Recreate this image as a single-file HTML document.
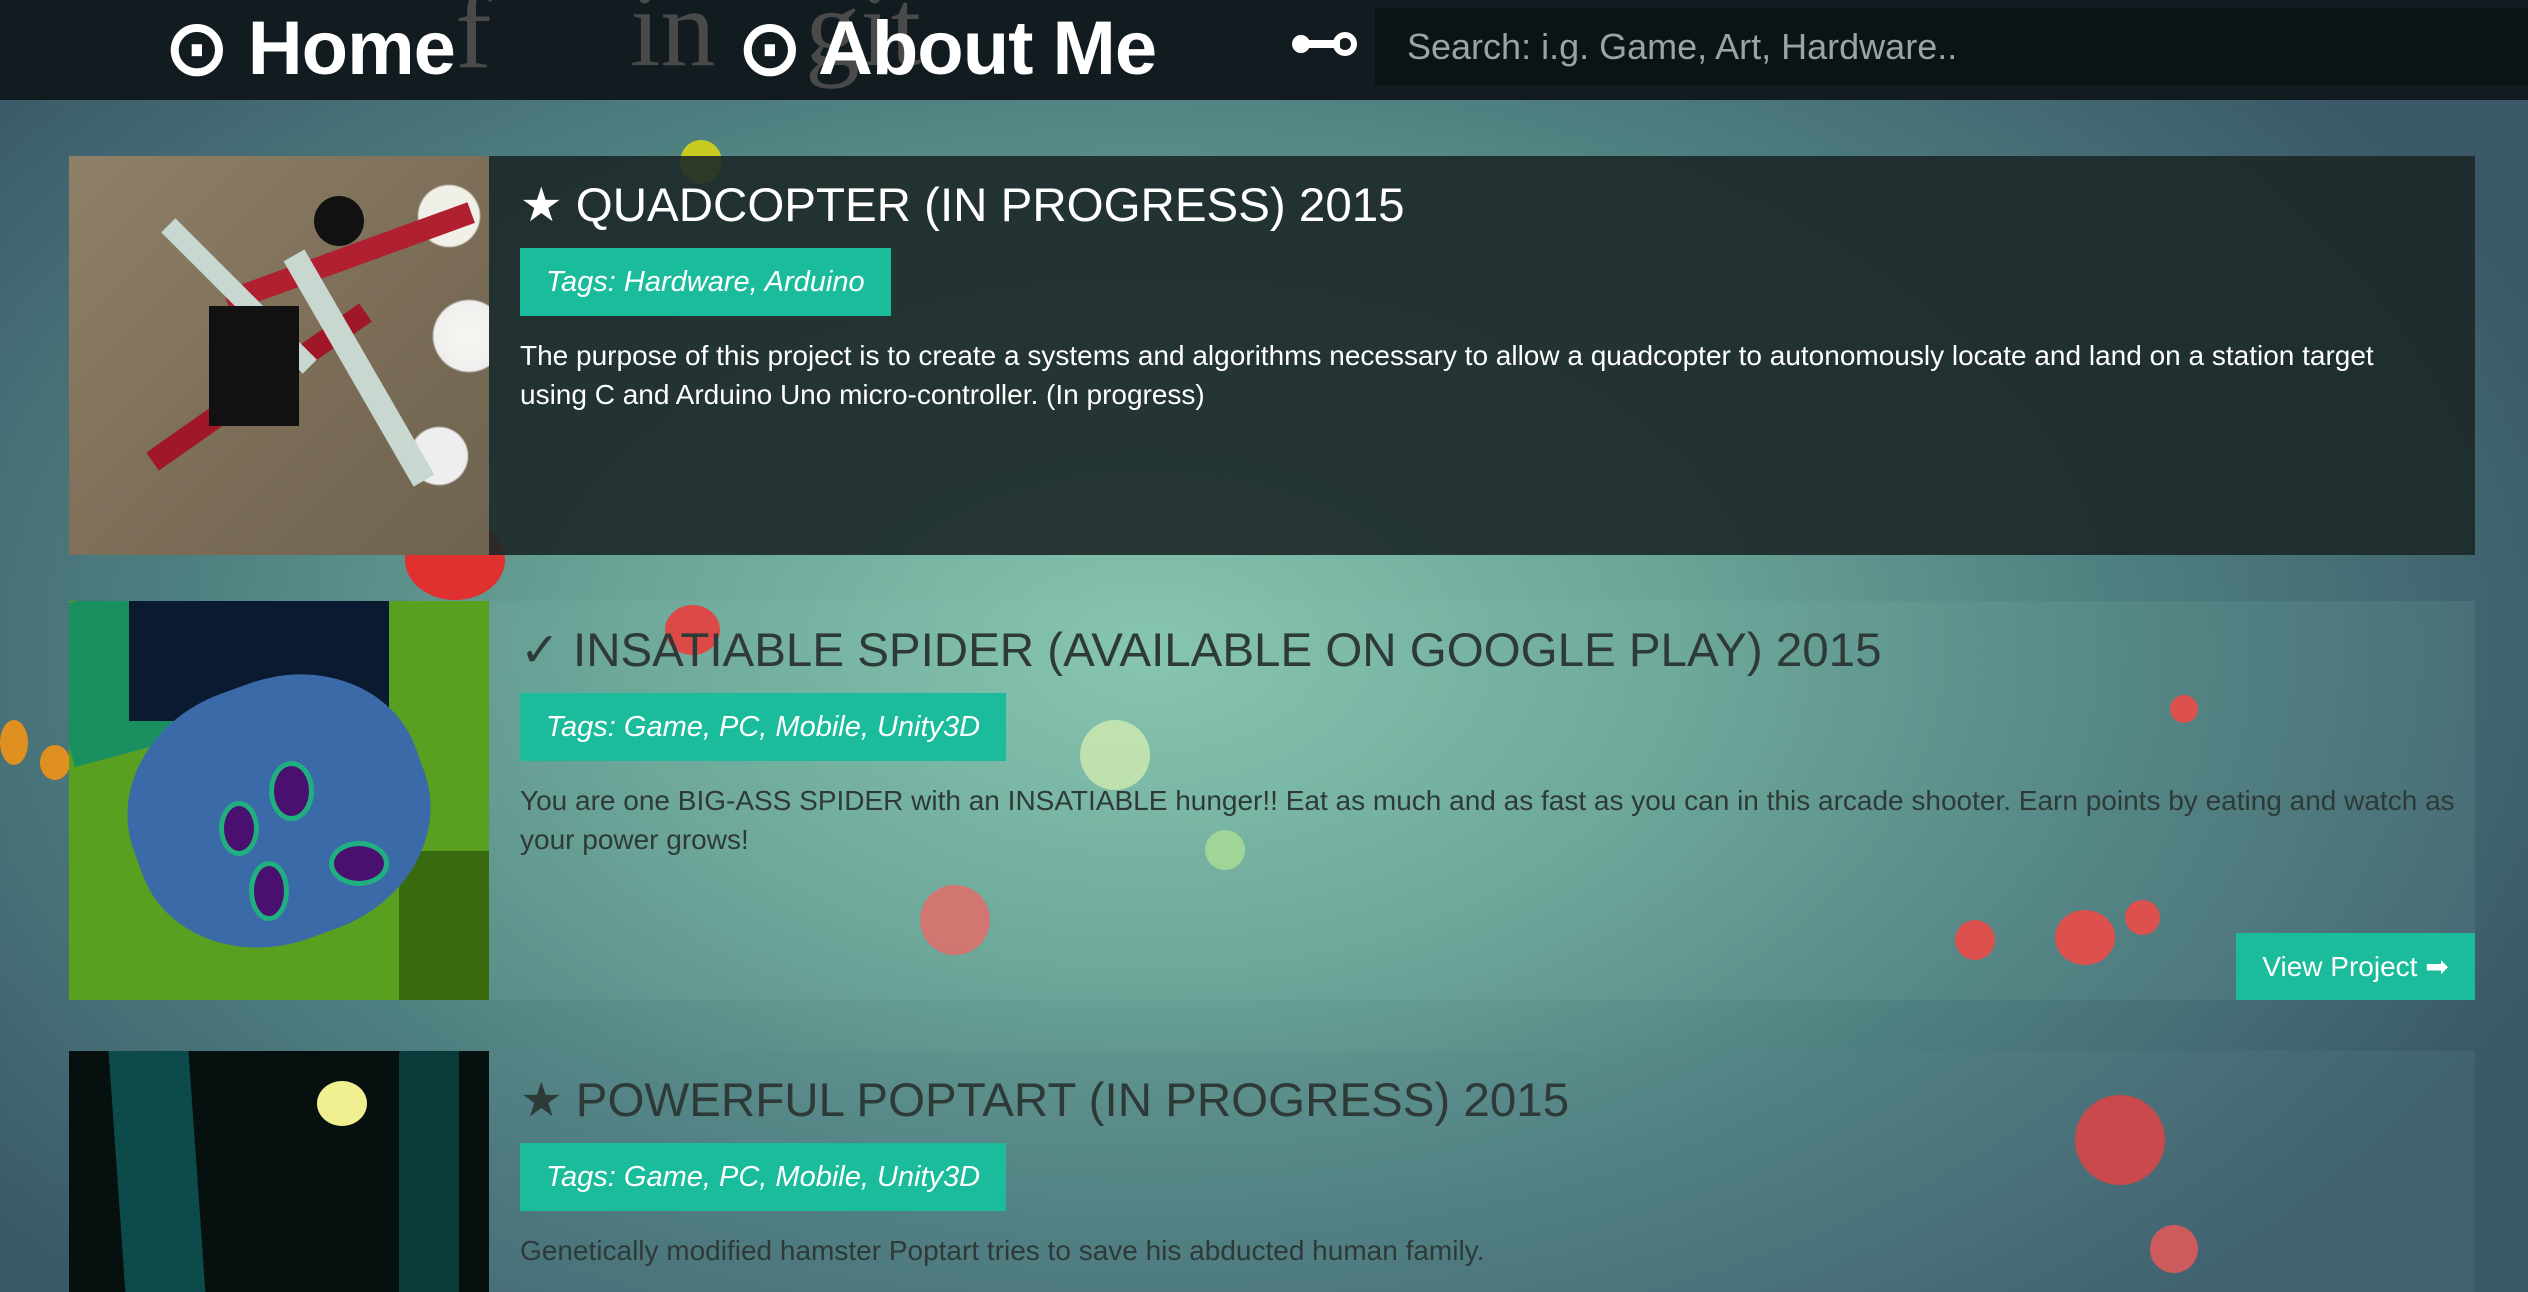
<!DOCTYPE html>
<html><head><meta charset="utf-8"><style>
*{margin:0;padding:0;box-sizing:border-box}
html,body{width:2528px;height:1292px;overflow:hidden}
body{font-family:"Liberation Sans",sans-serif;position:relative;
background:radial-gradient(ellipse 1500px 900px at 1150px 650px,#87c6b0 0%,#6aa597 35%,#4e7f80 65%,#3b5868 100%);}
.hdr{position:absolute;left:0;top:0;width:2528px;height:100px;background:#121b1f}
.nav{position:absolute;top:4px;color:#fff;font-weight:bold;font-size:76px;letter-spacing:-1px;line-height:90px}
.ghost{position:absolute;color:#4a4a4a;font-family:"Liberation Serif",serif;font-size:110px;line-height:100px}
.search{position:absolute;left:1375px;top:8px;width:1153px;height:77px;background:#0c1316;color:#9aa3a6;font-size:36px;line-height:77px;padding-left:32px}
.card{position:absolute;left:69px;width:2406px}
.img{position:absolute;left:0;top:0;width:420px;height:100%;overflow:hidden}
.t{position:absolute;left:451px;top:22px;font-size:47.5px;white-space:nowrap}
.tag{position:absolute;left:451px;top:92px;height:68px;background:#1bbc9b;color:#fff;font-style:italic;font-size:29px;line-height:68px;padding:0 26px}
.d{position:absolute;left:451px;top:180px;right:70px;font-size:28px;line-height:39px}
.btn{position:absolute;right:0;bottom:0;width:239px;height:67px;background:#1bbc9b;color:#fff;font-size:28px;line-height:67px;text-align:center}
.b{position:absolute;border-radius:50%}
</style></head><body>
<div class="b" style="left:680px;top:140px;width:42px;height:44px;background:#c8cc20"></div>
<div class="b" style="left:405px;top:520px;width:100px;height:80px;background:#e03030"></div>
<div class="b" style="left:665px;top:605px;width:55px;height:50px;background:#e83a3a"></div>
<div class="b" style="left:0;top:720px;width:28px;height:45px;background:#e09020"></div>
<div class="b" style="left:40px;top:745px;width:30px;height:35px;background:#e09020"></div>
<div class="b" style="left:1080px;top:720px;width:70px;height:70px;background:#d8f0b0;opacity:.8"></div>
<div class="b" style="left:1205px;top:830px;width:40px;height:40px;background:#b0e090;opacity:.8"></div>
<div class="b" style="left:2170px;top:695px;width:28px;height:28px;background:#e84040"></div>
<div class="b" style="left:1955px;top:920px;width:40px;height:40px;background:#e84040"></div>
<div class="b" style="left:2055px;top:910px;width:60px;height:55px;background:#e84040"></div>
<div class="b" style="left:2125px;top:900px;width:35px;height:35px;background:#e84040"></div>
<div class="b" style="left:920px;top:885px;width:70px;height:70px;background:#f06060;opacity:.85"></div>
<div class="b" style="left:2075px;top:1095px;width:90px;height:90px;background:#e83a3a"></div>
<div class="b" style="left:2150px;top:1225px;width:48px;height:48px;background:#ee5050"></div>

<div class="hdr"></div>
<div class="ghost" style="left:455px;top:-20px">f</div>
<div class="ghost" style="left:630px;top:-22px">in</div>
<div class="ghost" style="left:805px;top:-22px">git</div>
<div class="nav" style="left:165px">⊙ Home</div>
<div class="nav" style="left:738px">⊙ About Me</div>
<svg style="position:absolute;left:1290px;top:26px" width="70" height="36" viewBox="0 0 70 36"><circle cx="11" cy="18" r="9" fill="#fff"/><rect x="14" y="14" width="36" height="8" fill="#fff"/><circle cx="55" cy="18" r="9" fill="none" stroke="#fff" stroke-width="6"/></svg>
<div class="search">Search: i.g. Game, Art, Hardware..</div>

<div class="card" style="top:156px;height:399px;background:rgba(28,40,40,.9)">
 <div class="img" style="background:radial-gradient(circle at 380px 60px,#f0f0e8 0,#f0f0e8 30px,transparent 32px),radial-gradient(circle at 400px 180px,#f8f8f0 0,#eee 35px,transparent 37px),radial-gradient(circle at 370px 300px,#eee 0,#eee 28px,transparent 30px),linear-gradient(135deg,#8e8068,#7a6c56 60%,#6e6450)">
  <div style="position:absolute;left:60px;top:220px;width:260px;height:22px;background:#a01828;transform:rotate(-35deg)"></div>
  <div style="position:absolute;left:150px;top:90px;width:260px;height:22px;background:#b02030;transform:rotate(-20deg)"></div>
  <div style="position:absolute;left:160px;top:200px;width:260px;height:24px;background:#c8d8d0;transform:rotate(60deg)"></div>
  <div style="position:absolute;left:70px;top:130px;width:200px;height:20px;background:#c8d8d0;transform:rotate(45deg)"></div>
  <div style="position:absolute;left:140px;top:150px;width:90px;height:120px;background:#111"></div>
  <div style="position:absolute;left:245px;top:40px;width:50px;height:50px;border-radius:50%;background:#111"></div>
 </div>
 <div class="t" style="color:#fff">★ QUADCOPTER (IN PROGRESS) 2015</div>
 <div class="tag">Tags: Hardware, Arduino</div>
 <div class="d" style="color:#fff">The purpose of this project is to create a systems and algorithms necessary to allow a quadcopter to autonomously locate and land on a station target using C and Arduino Uno micro-controller. (In progress)</div>
</div>

<div class="card" style="top:601px;height:399px;background:rgba(140,200,180,.12)">
 <div class="img" style="background:#5aa020">
  <div style="position:absolute;left:-20px;top:-30px;width:300px;height:160px;background:#1a9060;transform:rotate(-15deg)"></div>
  <div style="position:absolute;left:60px;top:0;width:260px;height:120px;background:#0a1a30"></div>
  <div style="position:absolute;left:330px;top:250px;width:120px;height:180px;background:#3a6a10"></div>
  <div style="position:absolute;left:60px;top:80px;width:300px;height:260px;border-radius:45%;background:#3a6aa8;transform:rotate(-20deg)"></div>
  <div style="position:absolute;left:150px;top:200px;width:40px;height:55px;border-radius:50%;background:#4a1070;border:5px solid #20b080"></div>
  <div style="position:absolute;left:200px;top:160px;width:45px;height:60px;border-radius:50%;background:#4a1070;border:5px solid #20b080"></div>
  <div style="position:absolute;left:260px;top:240px;width:60px;height:45px;border-radius:50%;background:#4a1070;border:5px solid #20b080"></div>
  <div style="position:absolute;left:180px;top:260px;width:40px;height:60px;border-radius:50%;background:#4a1070;border:5px solid #20b080"></div>
 </div>
 <div class="t" style="color:#2e3a38">✓ INSATIABLE SPIDER (AVAILABLE ON GOOGLE PLAY) 2015</div>
 <div class="tag">Tags: Game, PC, Mobile, Unity3D</div>
 <div class="d" style="color:#2e3a38;right:10px">You are one BIG-ASS SPIDER with an INSATIABLE hunger!! Eat as much and as fast as you can in this arcade shooter. Earn points by eating and watch as your power grows!</div>
 <div class="btn">View Project ➡</div>
</div>

<div class="card" style="top:1051px;height:300px;background:rgba(90,130,140,.22)">
 <div class="img" style="background:#06100f">
  <div style="position:absolute;left:50px;top:0;width:80px;height:300px;background:#0d4a4a;transform:skewX(4deg)"></div>
  <div style="position:absolute;left:330px;top:0;width:60px;height:300px;background:#0a3a3a"></div>
  <div style="position:absolute;left:248px;top:30px;width:50px;height:45px;border-radius:50%;background:#f0f090"></div>
 </div>
 <div class="t" style="color:#2e3a38">★ POWERFUL POPTART (IN PROGRESS) 2015</div>
 <div class="tag">Tags: Game, PC, Mobile, Unity3D</div>
 <div class="d" style="color:#2e3a38">Genetically modified hamster Poptart tries to save his abducted human family.</div>
</div>
</body></html>
